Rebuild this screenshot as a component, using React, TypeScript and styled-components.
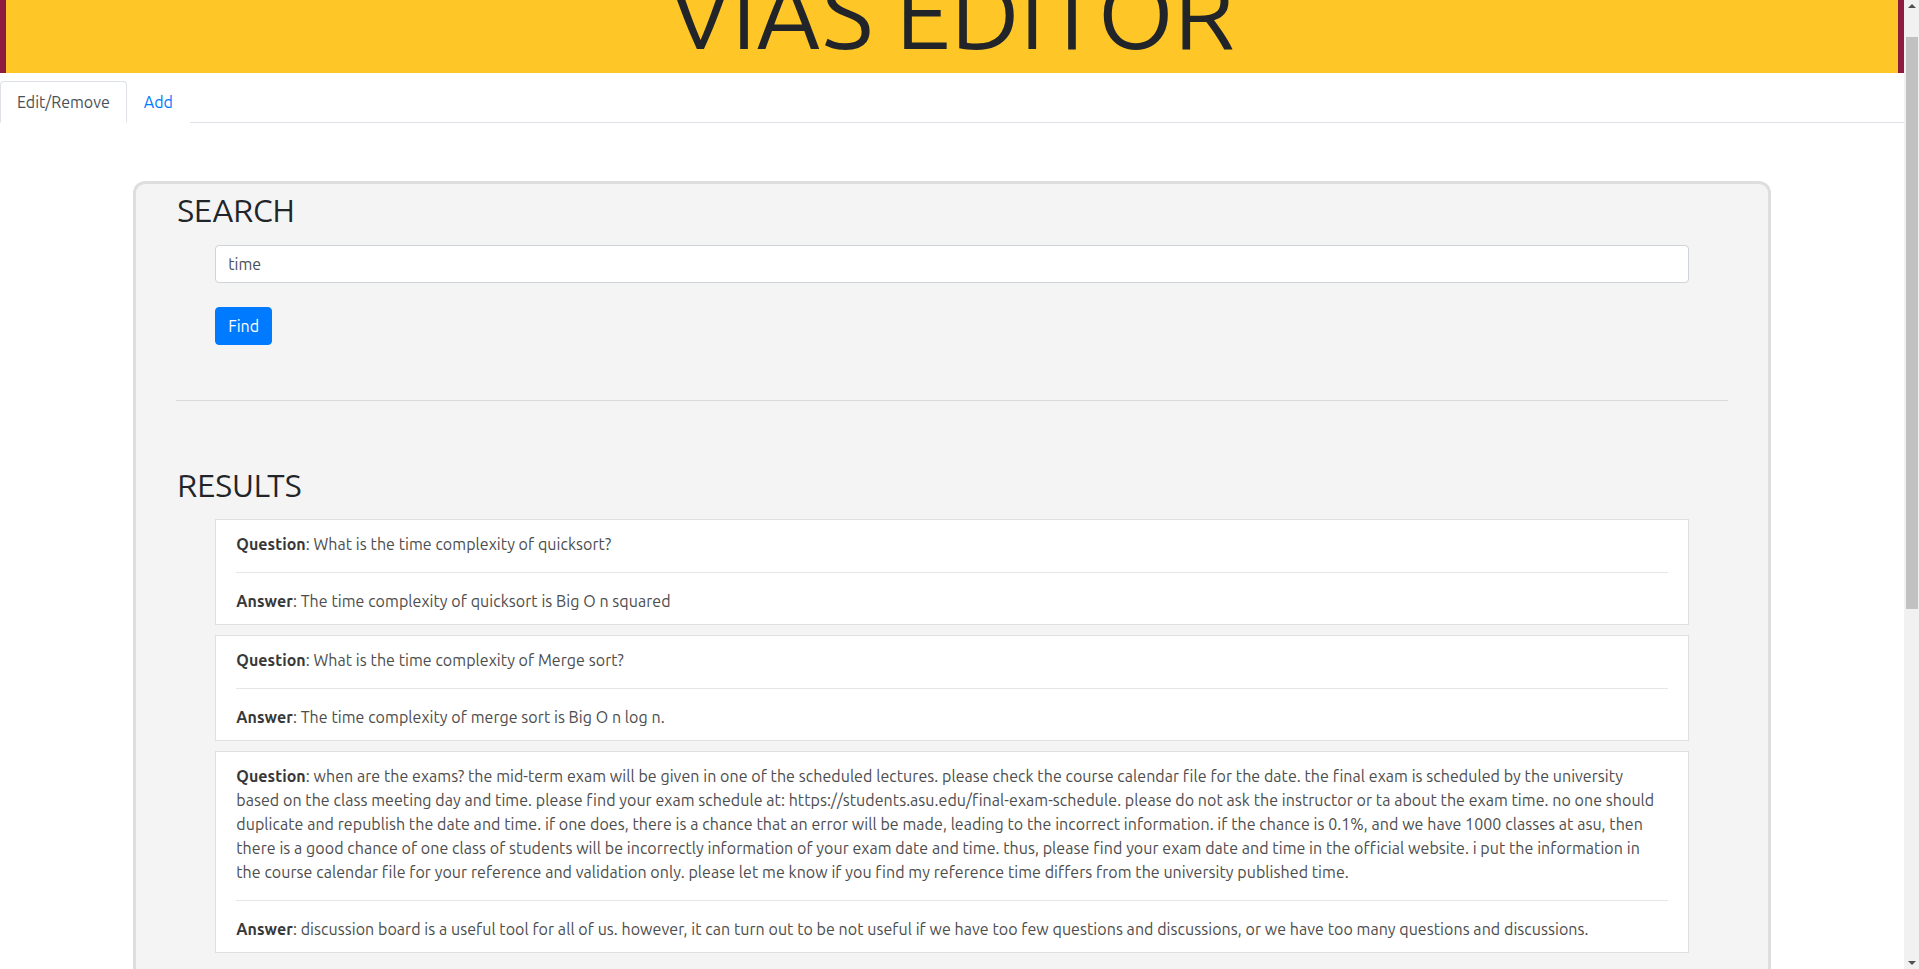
import React, { useState } from 'react';
import styled, { createGlobalStyle } from 'styled-components';

const GlobalStyle = createGlobalStyle`
  body {
    margin: 0;
    background: #fff;
    font-family: Ubuntu, Lato, "Noto Sans", sans-serif;
    font-size: 16px;
    line-height: 1.5;
    color: #212529;
  }
  * {
    box-sizing: border-box;
  }
`;

const Page = styled.div`
  width: calc(100% - 15px);
  min-height: 1550px;
`;

// the browser's own scrollbar is hidden in the headless shot, so draw one
const ScrollTrack = styled.div`
  position: fixed;
  top: 0;
  right: 0;
  width: 15px;
  height: 100vh;
  background: #f1f1f1;
`;

const ScrollThumb = styled.div`
  position: absolute;
  top: 37px;
  left: 2px;
  width: 12px;
  height: 572px;
  background: #c1c1c1;
`;

const ScrollArrow = styled.div<{ $down?: boolean }>`
  position: absolute;
  left: 4px;
  ${(p) => (p.$down ? 'bottom: 4px;' : 'top: 4px;')}
  width: 0;
  height: 0;
  border-left: 4px solid transparent;
  border-right: 4px solid transparent;
  ${(p) => (p.$down ? 'border-top: 4px solid #505050;' : 'border-bottom: 4px solid #505050;')}
`;

const Header = styled.header`
  height: 73px;
  overflow: hidden;
  background: #ffc627;
  border-left: 6px solid #8c1d40;
  border-right: 6px solid #8c1d40;
  text-align: center;
`;

const Title = styled.h1`
  margin: -45px 0 0;
  font-size: 98px;
  font-weight: 400;
  line-height: 1.2;
  color: #212529;
`;

const TabBar = styled.nav`
  display: flex;
  margin-top: 8px;
  border-bottom: 1px solid #dee2e6;
`;

const Tab = styled.button<{ $active?: boolean }>`
  margin-bottom: -1px;
  padding: 8px 16px;
  border: 1px solid transparent;
  border-color: ${(p) => (p.$active ? '#dee2e6 #dee2e6 #fff' : 'transparent')};
  border-radius: 4px 4px 0 0;
  background: #fff;
  color: ${(p) => (p.$active ? '#495057' : '#007bff')};
  font-family: inherit;
  font-size: 16px;
  line-height: 24px;
  outline: none;
  cursor: pointer;
`;

const Panel = styled.main`
  width: 86%;
  margin: 58px auto 0;
  padding: 7px 40px 40px;
  background: #f4f4f4;
  border: 3px solid #dedede;
  border-radius: 12px;
`;

const SectionTitle = styled.h2<{ $gap?: number; $after?: number }>`
  margin: ${(p) => p.$gap ?? 0}px 0 ${(p) => p.$after ?? 16}px 1px;
  font-size: 32px;
  font-weight: 400;
  line-height: 1.2;
  color: #212529;
`;

const Indented = styled.div`
  padding: 0 39px;
`;

const SearchInput = styled.input`
  display: block;
  width: 100%;
  height: 38px;
  padding: 6px 12px;
  border: 1px solid #ced4da;
  border-radius: 4px;
  background: #fff;
  color: #495057;
  font-family: inherit;
  font-size: 16px;
  outline: none;
`;

const FindButton = styled.button`
  margin-top: 24px;
  padding: 6px 12px;
  border: 1px solid #007bff;
  border-radius: 4px;
  background: #007bff;
  color: #fff;
  font-family: inherit;
  font-size: 16px;
  line-height: 24px;
  cursor: pointer;
`;

const Divider = styled.hr`
  margin: 55px 0 0;
  border: 0;
  border-top: 1px solid #dadada;
`;

const ResultCard = styled.div`
  margin-bottom: 10px;
  padding: 12px 20px 11px;
  background: #fff;
  border: 1px solid #dfdfdf;
`;

const Line = styled.p`
  margin: 0;
  font-size: 16px;
  line-height: 24px;
  letter-spacing: 0.055px;
  color: #4d4d4d;

  strong {
    color: #383838;
    font-weight: 700;
  }
`;

const CardRule = styled.hr`
  margin: 16px 0;
  border: 0;
  border-top: 1px solid #e6e6e6;
`;

const results = [
  {
    q: 'What is the time complexity of quicksort?',
    a: 'The time complexity of quicksort is Big O n squared',
  },
  {
    q: 'What is the time complexity of Merge sort?',
    a: 'The time complexity of merge sort is Big O n log n.',
  },
  {
    q: 'when are the exams? the mid-term exam will be given in one of the scheduled lectures. please check the course calendar file for the date. the final exam is scheduled by the university based on the class meeting day and time. please find your exam schedule at: https://students.asu.edu/final-exam-schedule. please do not ask the instructor or ta about the exam time. no one should duplicate and republish the date and time. if one does, there is a chance that an error will be made, leading to the incorrect information. if the chance is 0.1%, and we have 1000 classes at asu, then there is a good chance of one class of students will be incorrectly information of your exam date and time. thus, please find your exam date and time in the official website. i put the information in the course calendar file for your reference and validation only. please let me know if you find my reference time differs from the university published time.',
    a: 'discussion board is a useful tool for all of us. however, it can turn out to be not useful if we have too few questions and discussions, or we have too many questions and discussions.',
  },
];

const App = () => {
  const [tab, setTab] = useState<'edit' | 'add'>('edit');
  const [query, setQuery] = useState('time');

  return (
    <Page>
      <GlobalStyle />
      <Header>
        <Title>VIAS EDITOR</Title>
      </Header>
      <TabBar>
        <Tab $active={tab === 'edit'} onClick={() => setTab('edit')}>
          Edit/Remove
        </Tab>
        <Tab $active={tab === 'add'} onClick={() => setTab('add')}>
          Add
        </Tab>
      </TabBar>
      <Panel>
        <SectionTitle>SEARCH</SectionTitle>
        <Indented>
          <SearchInput value={query} onChange={(e) => setQuery(e.target.value)} />
          <FindButton type="button">Find</FindButton>
        </Indented>
        <Divider />
        <SectionTitle $gap={65} $after={14}>RESULTS</SectionTitle>
        <Indented>
          {results.map((r, i) => (
            <ResultCard key={i}>
              <Line>
                <strong>Question</strong>: {r.q}
              </Line>
              <CardRule />
              <Line>
                <strong>Answer</strong>: {r.a}
              </Line>
            </ResultCard>
          ))}
        </Indented>
      </Panel>
      <ScrollTrack>
        <ScrollArrow />
        <ScrollThumb />
        <ScrollArrow $down />
      </ScrollTrack>
    </Page>
  );
};

export default App;
